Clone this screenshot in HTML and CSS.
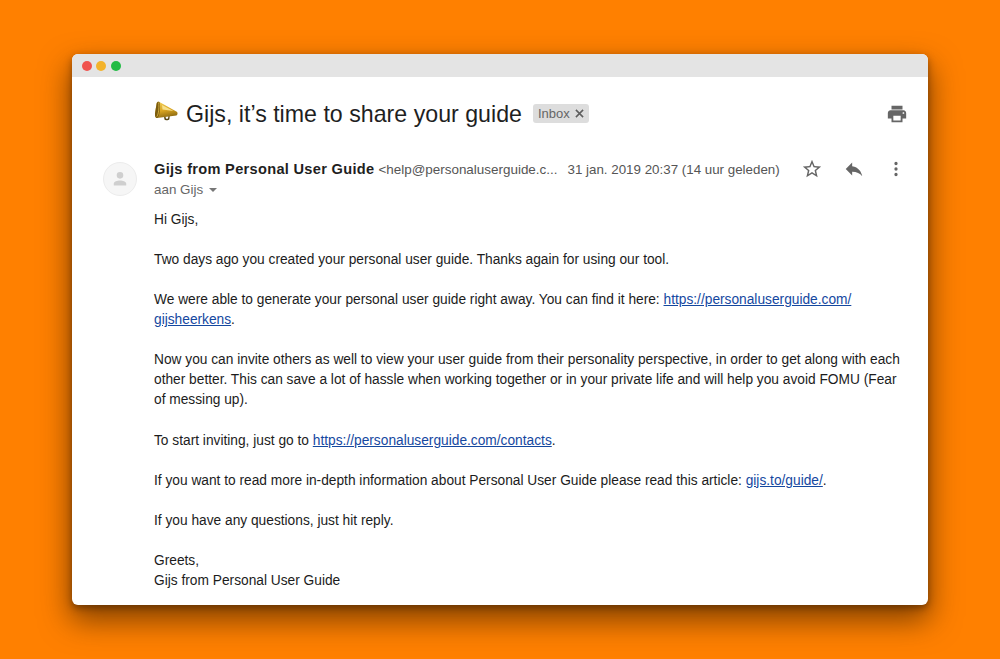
FILE: index.html
```html
<!DOCTYPE html>
<html lang="nl">
<head>
<meta charset="utf-8">
<title>Gijs, it's time to share your guide</title>
<link rel="stylesheet" href="styles.css">
</head>
<body>
<main class="window">
  <div class="titlebar">
    <span class="dot red"></span><span class="dot yellow"></span><span class="dot green"></span>
  </div>
  <div class="content">
    <header class="subject-row">
      <svg class="megaphone" viewBox="0 0 24 20" width="24" height="20" aria-hidden="true">
        <defs>
          <linearGradient id="cone" x1="0.2" y1="0" x2="0.5" y2="1">
            <stop offset="0" stop-color="#f2cf5a"/>
            <stop offset="0.55" stop-color="#d9a420"/>
            <stop offset="1" stop-color="#8c6a12"/>
          </linearGradient>
        </defs>
        <path d="M10 15.5L10.4 18.2C11 19.6 14.6 19.6 15.4 18.2L15.8 14.6L14.4 15L14.1 17.2C13.6 17.9 12.2 17.9 11.8 17.2L11.5 15.2Z" fill="#5a4814"/>
        <path d="M5 .7C4 .5 3 1 2.6 2.6L1 12.5C.7 15 1.6 17 3 17L22.4 14.4C23.8 13.8 23.9 11.6 22.8 10.7Z" fill="url(#cone)"/>
        <path d="M5 .7C3.8 .4 3 1 2.6 2.6L1 12.5C.7 15 1.6 17 3 17C4.2 16.8 5 14.8 5.6 11.6C6.3 7.6 6.4 1.6 5 .7Z" fill="#7a5c10"/>
        <path d="M4.6 1.6C5.2 3.6 5 8.6 4.3 11.8C3.9 13.6 3.4 15 2.8 15.6" fill="none" stroke="#e8c048" stroke-width=".8"/>
        <path d="M8 4L19.5 10L8.5 8.5Z" fill="#f7e08a"/>
      </svg>
      <h1 class="subject">Gijs, it’s time to share your guide</h1>
      <span class="label">Inbox <svg class="label-x" viewBox="0 0 10 10" width="9" height="9" aria-hidden="true"><path d="M1 1L9 9M9 1L1 9" stroke="#5e5e5e" stroke-width="1.7"/></svg></span>
      <svg class="print" viewBox="0 0 24 24" width="22" height="22" aria-hidden="true"><path fill="#666" d="M19 8H5c-1.66 0-3 1.34-3 3v6h4v4h12v-4h4v-6c0-1.66-1.34-3-3-3zm-3 11H8v-5h8v5zm3-7c-.55 0-1-.45-1-1s.45-1 1-1 1 .45 1 1-.45 1-1 1zm-1-9H6v4h12V3z"/></svg>
    </header>

    <section class="meta">
      <div class="avatar">
        <svg viewBox="0 0 24 24" width="22" height="22" aria-hidden="true"><path fill="#cfcfcf" d="M12 11.6a3.6 3.6 0 1 0 0-7.2 3.6 3.6 0 0 0 0 7.2zm0 1.9c-2.9 0-6.8 1.2-6.8 3.4v2.3h13.6v-2.3c0-2.2-3.9-3.4-6.8-3.4z"/></svg>
      </div>
      <div class="meta-main">
        <div class="from-row">
          <strong class="sender">Gijs from Personal User Guide</strong>
          <span class="address">&lt;help@personaluserguide.c...</span>
          <span class="date">31 jan. 2019 20:37 (14 uur geleden)</span>
          <div class="actions">
            <svg viewBox="0 0 24 24" width="22" height="22" aria-hidden="true"><path fill="#666" d="M22 9.24l-7.19-.62L12 2 9.19 8.63 2 9.24l5.46 4.73L5.82 21 12 17.27 18.18 21l-1.63-7.03L22 9.24zM12 15.4l-3.76 2.27 1-4.28-3.32-2.88 4.38-.38L12 6.1l1.71 4.04 4.38.38-3.32 2.88 1 4.28L12 15.4z"/></svg>
            <svg viewBox="0 0 24 24" width="22" height="22" aria-hidden="true"><path fill="#666" d="M10 9V5l-7 7 7 7v-4.1c5 0 8.5 1.6 11 5.1-1-5-4-10-11-11z"/></svg>
            <svg viewBox="0 0 24 24" width="22" height="22" aria-hidden="true"><path fill="#666" d="M12 7.8a1.8 1.8 0 1 0 0-3.6 1.8 1.8 0 0 0 0 3.6zm0 2.4a1.8 1.8 0 1 0 0 3.6 1.8 1.8 0 0 0 0-3.6zm0 6a1.8 1.8 0 1 0 0 3.6 1.8 1.8 0 0 0 0-3.6z"/></svg>
          </div>
        </div>
        <div class="to-row">aan Gijs <span class="caret"></span></div>
      </div>
    </section>

    <article class="message">
      <p>Hi Gijs,</p>
      <p>Two days ago you created your personal user guide. Thanks again for using our tool.</p>
      <p>We were able to generate your personal user guide right away. You can find it here: <a href="#">https://personaluserguide.com/<br>gijsheerkens</a>.</p>
      <p>Now you can invite others as well to view your user guide from their personality perspective, in order to get along with each other better. This can save a lot of hassle when working together or in your private life and will help you avoid FOMU (Fear of messing up).</p>
      <p>To start inviting, just go to <a href="#">https://personaluserguide.com/contacts</a>.</p>
      <p>If you want to read more in-depth information about Personal User Guide please read this article: <a href="#">gijs.to/guide/</a>.</p>
      <p>If you have any questions, just hit reply.</p>
      <p>Greets,<br>Gijs from Personal User Guide</p>
    </article>
  </div>
</main>
</body>
</html>
```

FILE: styles.css
```css
* { box-sizing: border-box; }
html, body { margin: 0; height: 100%; }
body {
  background: #ff8000;
  font-family: "Liberation Sans", Arial, sans-serif;
  padding: 54px 72px;
  overflow: hidden;
}
.window {
  height: 551px;
  background: #fff;
  border-radius: 6px;
  box-shadow: 0 14px 30px 2px rgba(60, 30, 0, 0.62), 0 3px 7px rgba(60, 30, 0, 0.5);
  overflow: hidden;
}
.titlebar {
  height: 23px;
  background: #e4e4e4;
  display: flex;
  align-items: center;
  gap: 4.5px;
  padding-left: 9.5px;
}
.dot { width: 10px; height: 10px; border-radius: 50%; }
.red { background: #f0534e; }
.yellow { background: #f3b32c; }
.green { background: #22bb45; }
.content { padding: 0 20px 0 82px; }
.subject-row {
  display: flex;
  align-items: center;
  height: 74px;
}
.megaphone { margin-right: 8px; margin-top: -6px; }
.subject {
  margin: 0;
  font-size: 23.2px;
  font-weight: 400;
  color: #1f1f1f;
}
.label {
  margin-left: 11px;
  background: #dddddd;
  border-radius: 3px;
  color: #666;
  font-size: 13px;
  height: 19px;
  padding: 0 5px;
  display: flex;
  align-items: center;
  gap: 5px;
  margin-top: -1px;
}
.print { margin-left: auto; margin-right: 0; }
.meta { display: flex; position: relative; height: 58px; }
.avatar {
  position: absolute;
  left: -51px;
  top: 11px;
  width: 34px;
  height: 34px;
  border-radius: 50%;
  background: #f6f6f6;
  border: 1px solid #ececec;
  display: flex;
  align-items: center;
  justify-content: center;
}
.meta-main { flex: 1; padding-top: 8px; }
.from-row { display: flex; align-items: center; height: 20px; white-space: nowrap; }
.sender { font-size: 14.6px; color: #1f1f1f; letter-spacing: 0.3px; }
.address { font-size: 13.45px; color: #555; margin-left: 4px; }
.date { font-size: 13.35px; color: #555; margin-left: 10px; }
.actions { display: flex; gap: 20px; margin-left: 21px; }
.to-row { font-size: 13.4px; color: #666; margin-top: 1px; height: 18px; display: flex; align-items: center; }
.caret {
  margin-left: 6px;
  margin-top: 1px;
  border-left: 4px solid transparent;
  border-right: 4px solid transparent;
  border-top: 4px solid #777;
}
.message { font-size: 13.74px; line-height: 20.08px; color: #1c1c1c; margin-top: 1px; }
.message p { margin: 0 0 20px; }
.message a { color: #15489f; text-decoration: underline; }
```
